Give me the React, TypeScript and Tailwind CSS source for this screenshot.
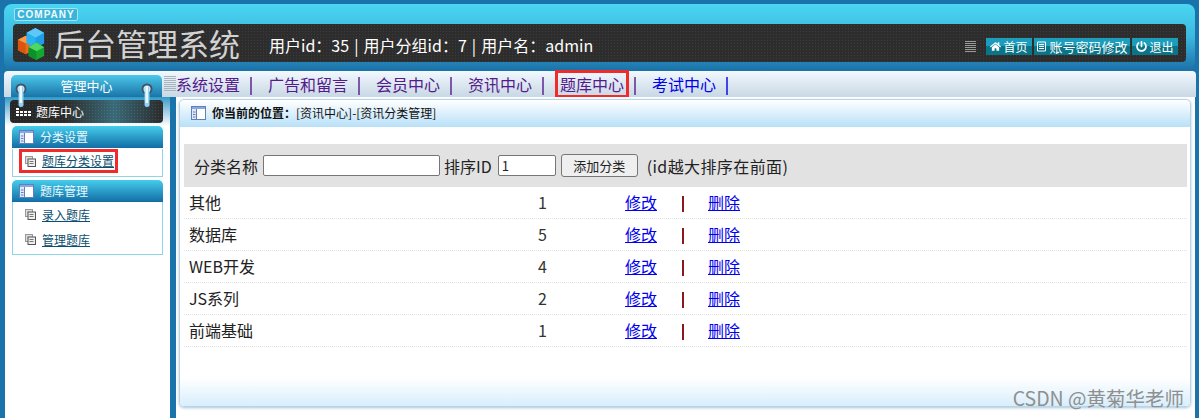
import { FaHome, FaPowerOff } from "react-icons/fa";

const font = "font-['Noto_Sans_CJK_SC','Noto_Sans',sans-serif]";

const PanelIcon = () => (
    <svg width="15" height="14" viewBox="0 0 15 14" className="shrink-0">
        <rect x="0.5" y="0.5" width="14" height="13" fill="#fff" stroke="#5f7fc0" />
        <rect x="1" y="1" width="13" height="2" fill="#8aa6e0" />
        <rect x="1" y="3" width="4.5" height="10" fill="#dfe8f8" />
        <path d="M5.500 3v10M2 6h2.500M2 8.500h2.500M2 11h2.500" stroke="#5f7fc0" />
    </svg>
);

const PageIcon = () => (
    <svg width="11" height="11" viewBox="0 0 11 11" className="shrink-0">
        <rect x="0.5" y="0.5" width="7" height="7" fill="#ddd" stroke="#999" />
        <rect x="3" y="3" width="7.500" height="7.500" fill="#eee" stroke="#555" />
        <path d="M4.500 5.500h4M4.500 7.500h4" stroke="#777" />
    </svg>
);

const Logo = () => (
    <svg width="29" height="33" viewBox="0 0 30 34" className="shrink-0">
        <path d="M1 13l8-4 8 4v11l-8 4-8-4z" fill="#ee6c1c" />
        <path d="M1 13l8 4 8-4-8-4z" fill="#f89a4a" />
        <path d="M9 17v11l-8-4V13z" fill="#d9560f" />
        <path d="M10 6l9-5 9 5v11l-9 5-9-5z" fill="#1f9ee8" />
        <path d="M10 6l9 5 9-5-9-5z" fill="#5cc8f8" />
        <path d="M10 17V6l9 5v11z" fill="#27b2f0" />
        <path d="M12 21l8-5 8 5v9l-8 4-8-4z" fill="#12a832" />
        <path d="M12 21l8 4 8-4-8-5z" fill="#4fd85f" />
        <path d="M12 30v-9l8 4v9z" fill="#0f8f2a" />
    </svg>
);

const Ring = ({ side }: { side: string }) => (
    <svg width="12" height="24" viewBox="0 0 12 24" className={`absolute top-[83px] ${side}`}>
        <circle cx="6" cy="6" r="4.500" fill="#dff3ff" stroke="#3f5566" strokeWidth="2" />
        <rect x="3.500" y="3" width="5" height="21" rx="2.500" fill="#8fd0f4" />
        <rect x="4.500" y="3" width="2.500" height="17" fill="#eaf7ff" />
    </svg>
);

const navItems = ["系统设置", "广告和留言", "会员中心", "资讯中心", "题库中心", "考试中心"];
const rows: [string, number][] = [
    ["其他", 1],
    ["数据库", 5],
    ["WEB开发", 4],
    ["JS系列", 2],
    ["前端基础", 1],
];

const TopBtn = ({ icon, label, w, size }: { icon: React.ReactNode; label: string; w: string; size: string }) => (
    <div className={`flex h-[17px] items-center justify-center gap-[2px] bg-linear-to-b from-[#1c9dbb] from-50% to-[#0a7488] to-50% leading-[17px] text-white ${w} ${size}`}>
        {icon}
        <span>{label}</span>
    </div>
);

const SideBox = ({ title, children, h }: { title: string; children: React.ReactNode; h: string }) => (
    <div className="mx-[7px]">
        <div className="flex h-[22px] items-center gap-[6px] rounded-t-[5px] bg-linear-to-b from-[#46cdec] to-[#126ea5] pl-[7px] text-[12px] leading-[22px] text-[#e8f8ff]">
            <PanelIcon />
            <span>{title}</span>
        </div>
        <div className={`${h} border border-t-0 border-[#8dd6e8] bg-white`}>{children}</div>
    </div>
);

const SideLink = ({ label, boxed }: { label: string; boxed?: boolean }) => (
    <div className={`flex items-center gap-[6px] text-[12px] leading-[16px] text-[#0b4f70] ${boxed ? "mt-[1px] ml-[6px] h-[24px] w-[99px] border-[3px] border-[#ee2c2c] pl-[3px]" : "h-[25px] pl-[12px]"}`}>
        <PageIcon />
        <span className="underline">{label}</span>
    </div>
);

export default function App() {
    return (
        <div className={`relative h-[418px] w-[1199px] overflow-hidden bg-[#1a74ab] ${font}`}>
            {/* header */}
            <div className="mx-[4px] mt-[4px] h-[66px] rounded-[8px] bg-linear-to-b from-[#4ad6f2] via-[#3cb8e0] to-[#1c72a8] pt-[4px]">
                <div className="ml-[10px] flex h-[13px] w-[64px] items-center justify-center rounded-[2px] border border-[#9fe4f6] bg-[#3cb4d8] font-['Liberation_Sans',sans-serif] text-[10px] leading-[11px] font-bold tracking-[1px] text-[#eefbff]">
                    COMPANY
                </div>
                <div className="mx-[9px] mt-[3px] flex h-[38px] items-center rounded-[4px] bg-[#2d2d2d] bg-[radial-gradient(#3c3c3c_1px,transparent_1px)] bg-size-[3px_3px] pl-[4px]">
                    <Logo />
                    <span className="ml-[8px] text-[31px] leading-[38px] text-[#d2d2d2]">后台管理系统</span>
                    <span className="mt-[3px] ml-[29px] text-[16px] leading-[24px] [word-spacing:1.5px] text-white">用户id：35 | 用户分组id：7 | 用户名：admin</span>
                    <div className="mt-[7px] mr-[8px] ml-auto flex items-center gap-[2px]">
                        <div className="mr-[8px] h-[12px] w-[11px] bg-[repeating-linear-gradient(#9a9a9a_0_1px,transparent_1px_2px)]" />
                        <TopBtn icon={<FaHome size={11} />} label="首页" w="w-[46px]" size="text-[12px]" />
                        <TopBtn
                            icon={
                                <svg width="11" height="11" viewBox="0 0 11 11">
                                    <path d="M1.500 1h8v9h-8zM3 3.500h5M3 5.500h5M3 7.500h5" fill="none" stroke="#fff" />
                                </svg>
                            }
                            label="账号密码修改"
                            w="w-[96px]"
                            size="text-[13px]"
                        />
                        <TopBtn icon={<FaPowerOff size={11} />} label="退出" w="w-[46px]" size="text-[12px]" />
                    </div>
                </div>
            </div>

            {/* nav */}
            <div className="mt-[1px] mr-[3px] ml-[4px] flex h-[26px] items-center rounded-t-[4px] bg-linear-to-b from-[#f2f8fe] to-[#c8d8e4] pl-[7px] text-[16px] leading-[22px]">
                <div className="flex h-[22px] w-[151px] items-center justify-center self-end rounded-t-[5px] bg-linear-to-b from-[#4cc8ea] to-[#1a74a8] text-[13px] text-white">
                    管理中心
                </div>
                <div className="ml-[2px] h-[16px] w-[12px] bg-[repeating-linear-gradient(#a8b4bc_0_1px,transparent_1px_2px)]" />
                {navItems.map((item, i) => (
                    <div key={item} className={`flex items-center ${i === 5 ? "text-[#0000ee]" : "text-[#551a8b]"}`}>
                        <span className={item === "题库中心" ? "-mx-[5px] border-[3px] border-[#ee2c2c] px-[2px]" : ""}>{item}</span>
                        <span className="mt-[4px] mr-[16px] ml-[10px] h-[18px] w-[2px] bg-current opacity-70" />
                    </div>
                ))}
            </div>

            {/* main */}
            <div className="flex h-[321px]">
                <div className="ml-[5px] flex w-[165px] flex-col bg-white">
                    <div className="bg-linear-to-b from-[#2a9ac8] to-white pt-[3px] pr-[7px] pb-[3px] pl-[5px]">
                        <div className="flex h-[23px] items-center gap-[5px] rounded-[4px] bg-[radial-gradient(#ffffff18_1px,transparent_1px),linear-gradient(to_right,#262626,#2a2a2a_35%,#3a6a78_68%,#2a2a2a)] bg-size-[3px_3px,100%_100%] pl-[6px] text-[12px] text-white">
                            <div className="grid grid-cols-4 gap-[1px]">
                                {Array.from({ length: 12 }).map((_, i) => (
                                    <div key={i} className={`h-[2px] w-[3px] ${i > 0 && i < 4 ? "bg-transparent" : "bg-white"}`} />
                                ))}
                            </div>
                            <span>题库中心</span>
                        </div>
                    </div>
                    <SideBox title="分类设置" h="h-[28px]">
                        <SideLink label="题库分类设置" boxed />
                    </SideBox>
                    <div className="mt-[3px]">
                        <SideBox title="题库管理" h="h-[53px]">
                            <SideLink label="录入题库" />
                            <SideLink label="管理题库" />
                        </SideBox>
                    </div>
                </div>

                <div className="ml-[6px] w-[1019px] bg-white pt-[2px] pl-[3px]">
                    <div className="flex h-[308px] w-[1012px] flex-col rounded-[5px] border border-[#b8d4e6] shadow-[0_1px_3px_#a8c4d8]">
                        <div className="flex h-[27px] shrink-0 items-center rounded-t-[5px] bg-linear-to-b from-white to-[#b8e0f8] pb-[2px] pl-[11px] text-[12px] leading-[16px] text-[#111]">
                            <PanelIcon />
                            <span className="ml-[6px] font-bold">你当前的位置：</span>
                            <span>[资讯中心]-[资讯分类管理]</span>
                        </div>
                        <div className="mt-[17px] mr-[3px] ml-[4px] flex h-[43px] shrink-0 items-center bg-[#e2e2e2] pl-[9px] text-[16px] leading-[22px] text-[#222]">
                            <span className="ml-[1px]">分类名称</span>
                            <input className="ml-[5px] h-[21px] w-[177px] rounded-[2px] border border-[#767676] bg-white" />
                            <span className="ml-[4px]">排序ID</span>
                            <input defaultValue="1" className="ml-[6px] h-[21px] w-[58px] rounded-[2px] border border-[#767676] bg-white pl-[3px] text-[13px] leading-[19px]" />
                            <button className="ml-[5px] h-[23px] w-[77px] rounded-[3px] border border-[#767676] bg-[#efefef] text-[13px] leading-[19px]">添加分类</button>
                            <span className="ml-[9px] tracking-[0.4px]">(id越大排序在前面)</span>
                        </div>
                        <div className="mr-[3px] ml-[4px] text-[16px] leading-[22px] text-[#222]">
                            {rows.map(([name, id]) => (
                                <div key={name} className="grid h-[32px] grid-cols-[349px_87px_57px_26px_1fr] items-center border-b border-dotted border-[#e2e2e2] pb-[2px] pl-[5px]">
                                    <span>{name}</span>
                                    <span className="text-[#333]">{id}</span>
                                    <a className="cursor-pointer text-[#0000ee] underline">修改</a>
                                    <span className="mt-[5px] h-[16px] w-[2px] bg-[#8a1a1a]" />
                                    <a className="cursor-pointer text-[#0000ee] underline">删除</a>
                                </div>
                            ))}
                        </div>
                        <div className="mt-auto h-[28px] shrink-0 rounded-b-[5px] bg-linear-to-b from-white to-[#d8eefc]" />
                    </div>
                </div>
            </div>

            {/* pins over nav tab */}
            <Ring side="left-[15px]" />
            <Ring side="left-[141px]" />

            {/* watermark */}
            <div className="absolute top-[385px] right-[15px] text-[19.5px] leading-[26px] text-[#8f8f8f]">CSDN @黄菊华老师</div>
        </div>
    );
}
